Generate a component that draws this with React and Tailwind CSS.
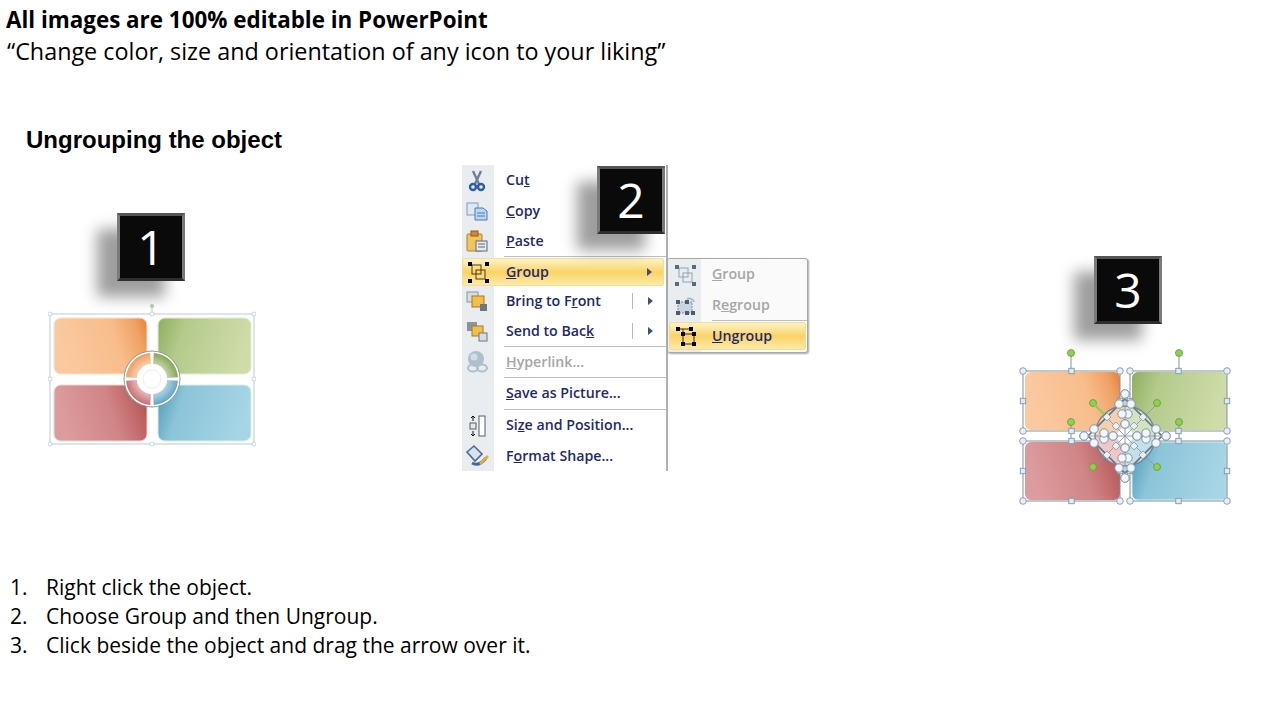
import React from 'react';

const sector = (cx, cy, r0, r1, a0, a1) => {
  const p = (r, a) => `${(cx + r * Math.cos((a * Math.PI) / 180)).toFixed(2)} ${(cy + r * Math.sin((a * Math.PI) / 180)).toFixed(2)}`;
  return `M${p(r0, a0)} L${p(r1, a0)} A${r1} ${r1} 0 0 1 ${p(r1, a1)} L${p(r0, a1)} A${r0} ${r0} 0 0 0 ${p(r0, a0)}Z`;
};

function TileGradients({ id }) {
  return (
    <defs>
      <linearGradient id={`${id}o`} x1="0" x2="1" y1="0.2" y2="0">
        <stop offset="0" stopColor="#fbc9a0" /><stop offset="0.6" stopColor="#f8bd8b" /><stop offset="0.85" stopColor="#f0a266" /><stop offset="1" stopColor="#e4813a" />
      </linearGradient>
      <linearGradient id={`${id}g`} x1="0" x2="1" y1="0" y2="0.2">
        <stop offset="0" stopColor="#8fae5f" /><stop offset="0.3" stopColor="#b3ca8b" /><stop offset="1" stopColor="#cfdca9" />
      </linearGradient>
      <linearGradient id={`${id}r`} x1="0" x2="1" y1="0.2" y2="0">
        <stop offset="0" stopColor="#dc9c9e" /><stop offset="0.55" stopColor="#d08486" /><stop offset="0.85" stopColor="#bd6062" /><stop offset="1" stopColor="#a9484a" />
      </linearGradient>
      <linearGradient id={`${id}b`} x1="0" x2="1" y1="0" y2="0.2">
        <stop offset="0" stopColor="#4a9ab5" /><stop offset="0.3" stopColor="#8cc4d9" /><stop offset="1" stopColor="#a6d5e5" />
      </linearGradient>
    </defs>
  );
}

function DiagramOne() {
  const corners = [[50, 314], [152, 314], [254, 314], [50, 379], [254, 379], [50, 444], [152, 444], [254, 444]];
  const cx = 152;
  const cy = 379;
  return (
    <svg width="208" height="144" viewBox="48 303 208 144" className="block">
      <TileGradients id="a" />
      <defs>
        <radialGradient id="fade" gradientUnits="userSpaceOnUse" cx={cx} cy={cy} r="26">
          <stop offset="0.55" stopColor="#fff" stopOpacity="0.55" />
          <stop offset="1" stopColor="#fff" stopOpacity="0" />
        </radialGradient>
      </defs>
      <rect x="50" y="314" width="204" height="130" fill="none" stroke="#b9cbd8" strokeWidth="1" />
      <line x1="152" y1="307" x2="152" y2="314" stroke="#b9cbd8" />
      <circle cx="152" cy="306" r="2" fill="#a9c9a4" />
      <rect x="54" y="318" width="93" height="56" rx="7" fill="url(#ao)" stroke="#fbe3cf" />
      <rect x="158" y="318" width="93" height="56" rx="7" fill="url(#ag)" stroke="#e3ecd2" />
      <rect x="54" y="385" width="93" height="56" rx="7" fill="url(#ar)" stroke="#efd5d6" />
      <rect x="158" y="385" width="93" height="56" rx="7" fill="url(#ab)" stroke="#d6edf4" />
      {corners.map(([x, y]) => (
        <circle key={`${x}-${y}`} cx={x} cy={y} r="2" fill="#fff" stroke="#b9cbd8" strokeWidth="0.8" />
      ))}
      <circle cx={cx} cy={cy} r="28" fill="#fff" stroke="#8f9a9a" strokeWidth="1" />
      <path d={sector(cx, cy, 15, 26, 184, 266)} fill="#ee9f63" />
      <path d={sector(cx, cy, 15, 26, 274, 356)} fill="#86a653" />
      <path d={sector(cx, cy, 15, 26, 94, 176)} fill="#c96f72" />
      <path d={sector(cx, cy, 15, 26, 4, 86)} fill="#5fa8c4" />
      <circle cx={cx} cy={cy} r="26" fill="url(#fade)" />
      <circle cx={cx} cy={cy} r="15" fill="#fff" />
      <circle cx={cx} cy={cy} r="9" fill="#fff" stroke="#eceeee" strokeWidth="1" />
    </svg>
  );
}

function Handle({ x, y, square }) {
  if (square) return <rect x={x - 2.7} y={y - 2.7} width="5.4" height="5.4" fill="#dfeaf2" stroke="#8298a8" strokeWidth="0.9" />;
  return <circle cx={x} cy={y} r="3.3" fill="#e8f0f6" stroke="#8298a8" strokeWidth="0.9" />;
}

function Box({ x, y, w = 97, h = 60 }) {
  return (
    <g>
      <rect x={x} y={y} width={w} height={h} fill="none" stroke="#7f929f" strokeWidth="1" />
      <Handle x={x} y={y} /><Handle x={x + w} y={y} /><Handle x={x} y={y + h} /><Handle x={x + w} y={y + h} />
      <Handle x={x + w / 2} y={y} square /><Handle x={x + w / 2} y={y + h} square />
      <Handle x={x} y={y + h / 2} square /><Handle x={x + w} y={y + h / 2} square />
    </g>
  );
}

function GreenDot({ x, y }) {
  return <circle cx={x} cy={y} r="3.5" fill="#8fd14f" stroke="#5f9a3a" strokeWidth="0.8" />;
}

// one quadrant of the centre handles, mirrored round the middle
const clusterCircles = [[0, 42], [6, 32], [3, 22], [0, 12], [41, 0], [31, 7], [21, 3], [12, 0]];
const clusterSquares = [[18, 19], [9, 10]];

function DiagramThree() {
  const cx = 1125;
  const cy = 436;
  const circles = [];
  clusterCircles.forEach(([dx, dy]) => {
    [[1, 1], [-1, 1], [1, -1], [-1, -1]].forEach(([sx, sy]) => circles.push([cx + dx * sx, cy + dy * sy]));
  });
  const squares = [];
  clusterSquares.forEach(([dx, dy]) => {
    [[1, 1], [-1, 1], [1, -1], [-1, -1]].forEach(([sx, sy]) => squares.push([cx + dx * sx, cy + dy * sy]));
  });
  return (
    <svg width="216" height="158" viewBox="1018 348 216 158" className="block">
      <TileGradients id="c" />
      <rect x="1025" y="372" width="95" height="58" rx="6" fill="url(#co)" />
      <rect x="1132" y="372" width="95" height="58" rx="6" fill="url(#cg)" />
      <rect x="1025" y="442" width="95" height="58" rx="6" fill="url(#cr)" />
      <rect x="1132" y="442" width="95" height="58" rx="6" fill="url(#cb)" stroke="#d6edf4" />
      <line x1="1071" y1="353" x2="1071" y2="371" stroke="#7f929f" />
      <line x1="1179" y1="353" x2="1179" y2="371" stroke="#7f929f" />
      <line x1="1071" y1="422" x2="1071" y2="441" stroke="#7f929f" />
      <line x1="1179" y1="422" x2="1179" y2="441" stroke="#7f929f" />
      <Box x={1023} y={371} />
      <Box x={1130} y={371} />
      <Box x={1023} y={441} />
      <Box x={1130} y={441} />
      <circle cx={cx} cy={cy} r="30" fill="#fff" />
      <path d={sector(cx, cy, 8, 30, 180, 270)} fill="#f6cfae" />
      <path d={sector(cx, cy, 8, 30, 270, 360)} fill="#d5e2bf" />
      <path d={sector(cx, cy, 8, 30, 90, 180)} fill="#f0c6c6" />
      <path d={sector(cx, cy, 8, 30, 0, 90)} fill="#c3e0ea" />
      <path d={`M${cx} ${cy - 37} L${cx + 37} ${cy} L${cx} ${cy + 37} L${cx - 37} ${cy}Z`} fill="none" stroke="#5d7386" strokeWidth="1.6" />
      <circle cx={cx} cy={cy} r="30" fill="none" stroke="#6f8595" strokeWidth="1.4" />
      <path d={`M${cx - 32} ${cy - 32} L${cx + 32} ${cy + 32} M${cx + 32} ${cy - 32} L${cx - 32} ${cy + 32} M${cx} ${cy - 42} V${cy + 42} M${cx - 42} ${cy} H${cx + 42}`} stroke="#8298a8" strokeWidth="0.9" />
      {circles.map(([x, y]) => <circle key={`${x}-${y}`} cx={x} cy={y} r="4.2" fill="#f0f6fb" stroke="#7f96a8" strokeWidth="1" />)}
      {squares.map(([x, y]) => <rect key={`${x}-${y}`} x={x - 2.8} y={y - 2.8} width="5.6" height="5.6" transform={`rotate(45 ${x} ${y})`} fill="#e8f1f8" stroke="#7f96a8" strokeWidth="0.8" />)}
      <GreenDot x={1071} y={353} /><GreenDot x={1179} y={353} />
      <GreenDot x={1071} y={422} /><GreenDot x={1179} y={422} />
      <GreenDot x={1093} y={403} /><GreenDot x={1157} y={403} />
      <GreenDot x={1093} y={467} /><GreenDot x={1157} y={467} />
      <line x1="1093" y1="403" x2="1104" y2="414" stroke="#8fd14f" strokeWidth="2" />
    </svg>
  );
}

function Badge({ n, className = '' }) {
  return (
    <div className={`w-[68px] h-[68px] shrink-0 flex items-center justify-center bg-[#0a0a0a] border-[3px] border-t-[#555555] border-l-[#7a7a7a] border-r-[#7a7a7a] border-b-[#2e2e2e] shadow-[-20px_16px_14px_rgba(0,0,0,0.38)] text-white text-[48px] leading-none font-['Open_Sans',sans-serif] ${className}`}>
      {n}
    </div>
  );
}

const Icon = ({ children }) => <svg width="24" height="24" viewBox="0 0 24 24" className="block">{children}</svg>;

const CutIcon = () => (
  <Icon>
    <path d="M8 2 L14 15 M16 2 L10 15" stroke="#6d7f95" strokeWidth="2.4" fill="none" />
    <circle cx="8" cy="18" r="3" fill="none" stroke="#2f5da3" strokeWidth="2.4" />
    <circle cx="16" cy="18" r="3" fill="none" stroke="#2f5da3" strokeWidth="2.4" />
  </Icon>
);
const CopyIcon = () => (
  <Icon>
    <rect x="2" y="4" width="11" height="12" fill="#dbe8f6" stroke="#7e9cc0" />
    <path d="M10 9 h8 l4 3 v9 h-12z" fill="#bdd5ef" stroke="#4f79b0" />
    <path d="M12 14 h8 M12 17 h8" stroke="#4f79b0" />
  </Icon>
);
const PasteIcon = () => (
  <Icon>
    <rect x="2" y="5" width="15" height="17" rx="1" fill="#eec65c" stroke="#a8822e" />
    <rect x="6" y="2" width="7" height="5" fill="#d9823a" stroke="#8a5a1e" />
    <rect x="11" y="12" width="11" height="10" fill="#e6e9ee" stroke="#5d6b7a" />
    <path d="M13 15 h7 M13 18 h7" stroke="#5d6b7a" />
  </Icon>
);
const GroupIcon = ({ color = '#000', line = '#4a3a10' }) => (
  <Icon>
    <rect x="6" y="5" width="9" height="9" fill="none" stroke={line} />
    <rect x="10" y="10" width="9" height="9" fill="none" stroke={line} />
    {[[2, 2], [19, 2], [2, 19], [19, 19]].map(([x, y]) => <rect key={`${x}${y}`} x={x} y={y} width="4" height="4" fill={color} />)}
  </Icon>
);
const RegroupIcon = () => (
  <Icon>
    <path d="M5 9 h14 v11 h-14z" fill="#c9d6e2" stroke="#7d8fa0" strokeDasharray="2 1" />
    {[[3, 7], [12, 7], [3, 18], [12, 18], [18, 18]].map(([x, y]) => <rect key={`${x}${y}`} x={x} y={y} width="4" height="4" fill="#4c5c6c" />)}
    <path d="M14 6 a5 5 0 0 1 7 3" fill="none" stroke="#a9bccd" strokeWidth="2" />
  </Icon>
);
const UngroupIcon = () => (
  <Icon>
    <path d="M4 5 H17 M9 5 V20 M9 10 H20 V20 H9" fill="none" stroke="#3a2a00" />
    {[[2, 3], [15, 3], [7, 8], [18, 8], [7, 18], [18, 18]].map(([x, y]) => <rect key={`${x}${y}`} x={x} y={y} width="4" height="4" fill="#000" />)}
  </Icon>
);
const FrontIcon = () => (
  <Icon>
    <rect x="2" y="3" width="11" height="10" fill="#d8dde2" stroke="#8b949c" />
    <rect x="7" y="7" width="12" height="11" fill="#f2bf4a" stroke="#a87a1c" />
    <rect x="15" y="15" width="7" height="7" fill="#6e7780" />
  </Icon>
);
const BackIcon = () => (
  <Icon>
    <rect x="2" y="3" width="10" height="9" fill="#8b949c" />
    <rect x="7" y="7" width="11" height="10" fill="#f2bf4a" stroke="#a87a1c" />
    <rect x="14" y="14" width="8" height="8" fill="#d8dde2" stroke="#6e7780" />
  </Icon>
);
const LinkIcon = () => (
  <Icon>
    <circle cx="11" cy="9" r="8" fill="#aebfd0" />
    <circle cx="9" cy="7" r="3.5" fill="#d3dde7" />
    <ellipse cx="8" cy="18" rx="5" ry="3.5" fill="none" stroke="#aebfd0" strokeWidth="2" />
    <ellipse cx="17" cy="18" rx="5" ry="3.5" fill="none" stroke="#aebfd0" strokeWidth="2" />
  </Icon>
);
const SizeIcon = () => (
  <Icon>
    <rect x="14" y="2" width="6" height="20" fill="#fff" stroke="#55606b" />
    <rect x="5" y="9" width="6" height="6" fill="#e6e6e6" stroke="#55606b" />
    <path d="M8 2 v5 M6 4 l2 -2 l2 2 M8 17 v5 M6 20 l2 2 l2 -2" fill="none" stroke="#111" />
  </Icon>
);
const FormatIcon = () => (
  <Icon>
    <path d="M2 8 L9 2 L17 10 L10 17 Z" fill="#d7e4f0" stroke="#4d6c90" strokeWidth="1.6" />
    <path d="M7 19 Q14 23 21 14" fill="none" stroke="#3c68a8" strokeWidth="3" />
    <path d="M15 20 L23 12" stroke="#e0b030" strokeWidth="2.5" />
  </Icon>
);

function Label({ pre = '', u, post = '', className = 'text-[#1d2a6d]' }) {
  return <span className={`block text-[14.2px] leading-none font-semibold font-['Open_Sans',sans-serif] ${className}`}>{pre}<u>{u}</u>{post}</span>;
}

function Row({ icon, h, children, more }) {
  return (
    <div className={`flex items-center ${h}`}>
      <div className="w-[34px] shrink-0 flex justify-center">{icon}</div>
      <div className="ml-[12px]">{children}</div>
      {more && (
        <div className="ml-auto mr-[13px] w-[21px] flex items-center justify-between">
          <span className="w-px h-[16px] bg-[#b8bcc4]" />
          <span className="w-0 h-0 border-y-[4px] border-y-transparent border-l-[5px] border-l-[#3d4f78]" />
        </div>
      )}
    </div>
  );
}

const Sep = () => <div className="h-px ml-[44px] bg-[#bdbdbd]" />;

function ContextMenu() {
  return (
    <div className="relative w-[208px] h-[306px] ml-[204px] shrink-0">
      <div className="absolute left-[2px] top-0 bottom-0 w-[32px] bg-[#e9edf0]" />
      <div className="relative h-full border-r-2 border-r-[#b0b0b0]">
        <Row h="h-[31px]" icon={<CutIcon />}><Label pre="Cu" u="t" /></Row>
        <Row h="h-[30px]" icon={<CopyIcon />}><Label u="C" post="opy" /></Row>
        <Row h="h-[30px]" icon={<PasteIcon />}><Label u="P" post="aste" /></Row>
        <Sep />
        <div className="flex items-center h-[28px] mt-px mx-[2px] rounded-[2px] border border-[#f3dc9c] bg-linear-to-b from-[#fef3c6] via-[#fbd364] to-[#fdeaa8]">
          <div className="w-[29px] shrink-0 flex justify-center"><GroupIcon /></div>
          <div className="ml-[14px]"><Label u="G" post="roup" /></div>
          <span className="ml-auto mr-[11px] w-0 h-0 border-y-[4px] border-y-transparent border-l-[5px] border-l-[#3d4f78]" />
        </div>
        <Row h="h-[30px]" more icon={<FrontIcon />}><Label pre="Bring to F" u="r" post="ont" /></Row>
        <Row h="h-[30px]" more icon={<BackIcon />}><Label pre="Send to Bac" u="k" /></Row>
        <Sep />
        <Row h="h-[30px]" icon={<LinkIcon />}><Label u="H" post="yperlink..." className="text-[#a6a6a6]" /></Row>
        <Sep />
        <Row h="h-[31px]" icon={<span className="block h-[24px]" />}><Label u="S" post="ave as Picture..." /></Row>
        <Sep />
        <Row h="h-[31px]" icon={<SizeIcon />}><Label pre="Si" u="z" post="e and Position..." /></Row>
        <Row h="h-[30px]" icon={<FormatIcon />}><Label pre="F" u="o" post="rmat Shape..." /></Row>
      </div>
      <Badge n="2" className="absolute left-[137px] top-px" />
      <div className="absolute left-[207px] top-[93px] w-[141px] h-[95px] bg-[#fafafa] rounded-[3px] border border-[#a8a8a8] shadow-[1px_1px_2px_rgba(0,0,0,0.35)] overflow-hidden">
        <div className="absolute left-0 top-0 bottom-0 w-[33px] bg-[#e9edf0]" />
        <div className="relative flex items-center h-[31px]">
          <div className="w-[33px] flex justify-center"><GroupIcon color="#5a6b7c" line="#8fa2b4" /></div>
          <div className="ml-[11px]"><Label u="G" post="roup" className="text-[#a6a6a6]" /></div>
        </div>
        <div className="relative flex items-center h-[30px]">
          <div className="w-[33px] flex justify-center"><RegroupIcon /></div>
          <div className="ml-[11px]"><Label pre="R" u="e" post="group" className="text-[#a6a6a6]" /></div>
        </div>
        <div className="relative h-px ml-[44px] bg-[#bdbdbd]" />
        <div className="relative flex items-center h-[28px] mx-px mt-px rounded-[2px] border border-[#f3dc9c] bg-linear-to-b from-[#fef3c6] via-[#fbd364] to-[#fdeaa8]">
          <div className="w-[32px] flex justify-center"><UngroupIcon /></div>
          <div className="ml-[10px]"><Label u="U" post="ngroup" /></div>
        </div>
      </div>
    </div>
  );
}

const steps = ['Right click the object.', 'Choose Group and then Ungroup.', 'Click beside the object and drag the arrow over it.'];

export default function App() {
  return (
    <div className="w-[1280px] h-[720px] bg-white overflow-hidden text-black font-['Open_Sans',sans-serif]">
      <div className="pt-[4px] pl-[6px]">
        <p className="text-[22.4px] leading-[32px] font-bold">All images are 100% editable in PowerPoint</p>
        <p className="text-[23.35px] leading-[32px] pl-px -mt-px">“Change color, size and orientation of any icon to your liking”</p>
      </div>
      <h1 className="mt-[59px] ml-[26px] text-[24px] leading-[28px] font-bold font-['Liberation_Sans',sans-serif]">Ungrouping the object</h1>
      <div className="mt-[11px] h-[346px] flex items-start">
        <div className="ml-[48px] mt-[48px] w-[208px] shrink-0">
          <Badge n="1" className="ml-[69px] mb-[22px]" />
          <DiagramOne />
        </div>
        <ContextMenu />
        <div className="ml-[350px] mt-[91px] w-[216px] shrink-0">
          <Badge n="3" className="ml-[76px] mb-[24px]" />
          <DiagramThree />
        </div>
      </div>
      <ol className="mt-[62px] text-[21px] leading-[29px]">
        {steps.map((s, i) => (
          <li key={s} className="flex">
            <span className="w-[46px] pl-[10px] shrink-0">{i + 1}.</span>
            <span>{s}</span>
          </li>
        ))}
      </ol>
    </div>
  );
}
